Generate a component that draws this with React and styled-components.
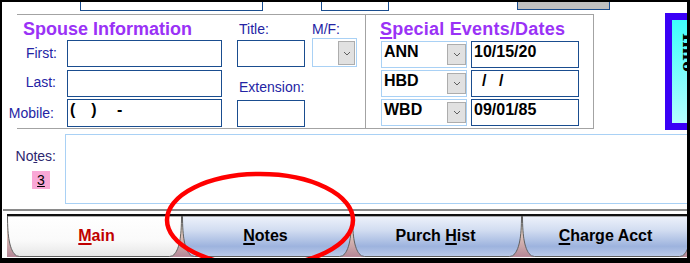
import React from "react";
import styled, { createGlobalStyle } from "styled-components";

const Global = createGlobalStyle`
  html, body { margin: 0; padding: 0; background: #fff; }
  * { box-sizing: border-box; }
`;

const Frame = styled.div`
  position: relative;
  width: 690px;
  height: 263px;
  border-style: solid;
  border-color: #000;
  border-width: 2px 3px 5px 2px;
  background: #fff;
  overflow: hidden;
  display: flex;
  flex-direction: column;
  font-family: "Liberation Sans", Arial, sans-serif;
`;

const TopStrip = styled.div`
  display: flex;
  align-items: flex-start;
  height: 11px;
  flex: none;
`;

const StubBox = styled.div`
  flex: none;
  width: ${(p) => p.$w}px;
  height: ${(p) => p.$h}px;
  margin-left: ${(p) => p.$ml}px;
  border: 1px solid #1a4d8f;
  border-top: none;
  background: ${(p) => p.$fill || "#fff"};
`;

const MiddleRow = styled.div`
  display: flex;
  align-items: flex-start;
  height: 117px;
  flex: none;
`;

const SpouseSection = styled.div`
  flex: none;
  margin-left: 15px;
  margin-top: 1px;
  width: 349px;
  height: 115px;
  border-top: 1px solid #a3a3a3;
  border-bottom: 1px solid #a3a3a3;
  border-right: 1px solid #a3a3a3;
  display: grid;
  grid-template-columns: 40px 10px 155px 15px 68px 7px 45px;
  grid-template-rows: 25px 30px 29px 28px;
`;

const SectionTitle = styled.div`
  grid-column: 1 / 7;
  grid-row: 1;
  align-self: start;
  justify-self: start;
  margin-top: 4px;
  margin-left: ${(p) => p.$ml || 0}px;
  font-size: 18px;
  line-height: 20px;
  font-weight: bold;
  color: #9a32f6;
  white-space: nowrap;
`;

const FieldLabel = styled.div`
  grid-column: ${(p) => p.$col};
  grid-row: ${(p) => p.$row};
  justify-self: ${(p) => (p.$end ? "end" : "start")};
  align-self: ${(p) => (p.$bottom ? "end" : "start")};
  margin-top: ${(p) => p.$mt || 0}px;
  margin-bottom: ${(p) => p.$mb || 0}px;
  margin-left: ${(p) => p.$ml || 0}px;
  margin-right: ${(p) => p.$mr || 0}px;
  font-size: 14px;
  line-height: 16px;
  color: #2424a4;
  white-space: nowrap;
`;

const TextBox = styled.div`
  grid-column: ${(p) => p.$col || "auto"};
  grid-row: ${(p) => p.$row || "auto"};
  align-self: start;
  flex: none;
  width: ${(p) => p.$w}px;
  height: ${(p) => p.$h}px;
  margin-top: ${(p) => p.$mt || 0}px;
  margin-left: ${(p) => p.$ml || 0}px;
  border: 1px solid #1a4d8f;
  background: #fff;
  padding: 1px 0 0 2px;
  font-size: 16px;
  line-height: 18px;
  font-weight: bold;
  color: #000;
  white-space: pre;
  overflow: hidden;
`;

const SelectBox = styled.div`
  grid-column: ${(p) => p.$col || "auto"};
  grid-row: ${(p) => p.$row || "auto"};
  align-self: start;
  flex: none;
  width: ${(p) => p.$w}px;
  height: ${(p) => p.$h}px;
  margin-top: ${(p) => p.$mt || 0}px;
  border: 1px solid #a9d1f5;
  background: #fff;
  display: flex;
  align-items: flex-start;
  padding: ${(p) => p.$pt}px ${(p) => p.$pr}px 0 2px;
`;

const SelectValue = styled.div`
  flex: 1;
  font-size: 16px;
  line-height: 18px;
  font-weight: bold;
  color: #000;
  margin-top: ${(p) => p.$mt || 0}px;
`;

const DropButton = styled.div`
  flex: none;
  width: ${(p) => p.$w}px;
  height: ${(p) => p.$h}px;
  background: #e1e1e1;
  border: 1px solid #adadad;
  display: flex;
  align-items: center;
  justify-content: center;
`;

const EventsSection = styled.div`
  flex: none;
  margin-top: 1px;
  width: 228px;
  height: 115px;
  border-top: 1px solid #a3a3a3;
  border-bottom: 1px solid #a3a3a3;
  border-right: 1px solid #a3a3a3;
  display: flex;
  flex-direction: column;
  padding-left: 14px;
`;

const EventsTitle = styled.div`
  margin-top: 4px;
  font-size: 18px;
  line-height: 20px;
  font-weight: bold;
  color: #9a32f6;
  white-space: nowrap;
  letter-spacing: 0.2px;
  u { text-decoration-thickness: 2px; text-underline-offset: 2px; }
`;

const EventRows = styled.div`
  display: flex;
  flex-direction: column;
  gap: 2px;
  margin-top: 2px;
  padding-left: 1px;
`;

const EventRow = styled.div`
  display: flex;
  align-items: flex-start;
`;

const PurpleBox = styled.div`
  flex: none;
  margin-left: 71px;
  width: 40px;
  height: 117px;
  border: 7px solid #3a00f6;
  background: linear-gradient(#3ffcfc, #b6fdfd);
  display: flex;
  justify-content: flex-start;
  padding-left: 7px;
  padding-top: 13px;
`;

const VerticalText = styled.div`
  writing-mode: vertical-rl;
  font-family: "Liberation Serif", serif;
  font-weight: bold;
  font-size: 22px;
  line-height: 22px;
  color: #000;
  white-space: nowrap;
`;

const NotesRow = styled.div`
  display: flex;
  flex: none;
  height: 70px;
  margin-top: 4px;
`;

const NotesLabelCol = styled.div`
  flex: none;
  width: 63px;
  display: flex;
  flex-direction: column;
  align-items: flex-end;
  padding-right: 9px;
`;

const NotesLabel = styled.div`
  margin-top: 14px;
  font-size: 14px;
  line-height: 16px;
  color: #2c2670;
`;

const CountBadge = styled.div`
  margin-top: 7px;
  margin-right: 6px;
  width: 18px;
  height: 18px;
  background: #f9a8d6;
  font-size: 14px;
  line-height: 18px;
  text-align: center;
  color: #000;
  text-decoration: underline;
`;

const NotesArea = styled.div`
  flex: none;
  width: 640px;
  height: 70px;
  border: 1px solid #a9d1f5;
  background: #fff;
`;

const Separator = styled.div`
  flex: none;
  height: 2px;
  margin-top: 5px;
  margin-left: 1px;
  background: #8a8a8a;
`;

const TabBar = styled.div`
  flex: none;
  display: flex;
  margin-top: 3px;
  margin-left: 5px;
  height: 43px;
  border-top: 2px solid #111;
  background: linear-gradient(#f3ecd0 0%, #dcc0b8 50%, #b48696 100%);
`;

const TabItem = styled.div`
  position: relative;
  flex: none;
  width: ${(p) => p.$w}px;
  height: 41px;
  display: flex;
  align-items: center;
  justify-content: center;
  padding-left: ${(p) => p.$pl || 0}px;
  padding-right: ${(p) => p.$pr || 0}px;
`;

const TabShape = styled.svg`
  position: absolute;
  left: 0;
  top: 0;
`;

const TabLabel = styled.span`
  position: relative;
  font-size: 16px;
  font-weight: bold;
  line-height: 18px;
  margin-top: -1px;
  color: ${(p) => (p.$active ? "#c00000" : "#000")};
  white-space: pre;
  u { text-decoration-thickness: 2px; text-underline-offset: 2px; }
`;

const Annotation = styled.svg`
  position: absolute;
  left: -2px;
  top: -2px;
  pointer-events: none;
`;

function Chevron() {
  return (
    <svg width="8" height="5" viewBox="0 0 8 5">
      <path d="M1 1 L4 4 L7 1" fill="none" stroke="#606060" strokeWidth="1" />
    </svg>
  );
}

function Select({ value, w, h, btnW, btnH, pt, pr, col, row, mt }) {
  return (
    <SelectBox $w={w} $h={h} $pt={pt} $pr={pr} $col={col} $row={row} $mt={mt}>
      <SelectValue $mt={1 - pt}>{value}</SelectValue>
      <DropButton $w={btnW} $h={btnH}>
        <Chevron />
      </DropButton>
    </SelectBox>
  );
}

function Tab({ w, active, pl, pr, id, children }) {
  const gid = `tabfill-${id}`;
  const W = w;
  const d = `M0.5 0 C0.5 22 3 32 7 37.5 Q9 40.5 12.5 40.5 L${W - 12.5} 40.5 Q${W - 9} 40.5 ${W - 7} 37.5 C${W - 3} 32 ${W - 0.5} 22 ${W - 0.5} 0 Z`;
  return (
    <TabItem $w={w} $pl={pl} $pr={pr}>
      <TabShape width={W} height={41} viewBox={`0 0 ${W} 41`}>
        <defs>
          <linearGradient id={gid} x1="0" y1="0" x2="0" y2="1">
            {active ? (
              <>
                <stop offset="0" stopColor="#ffffff" />
                <stop offset="0.6" stopColor="#fafafa" />
                <stop offset="1" stopColor="#e6e6e6" />
              </>
            ) : (
              <>
                <stop offset="0" stopColor="#eef2fb" />
                <stop offset="0.35" stopColor="#d2ddf1" />
                <stop offset="0.75" stopColor="#9db3de" />
                <stop offset="1" stopColor="#bccbea" />
              </>
            )}
          </linearGradient>
        </defs>
        <path d={d} fill={`url(#${gid})`} stroke="#5f5f5f" strokeWidth="1" />
      </TabShape>
      <TabLabel $active={active}>{children}</TabLabel>
    </TabItem>
  );
}

export default function App() {
  return (
    <>
      <Global />
      <Frame>
        <TopStrip>
          <StubBox $ml={78} $w={183} $h={9} />
          <StubBox $ml={58} $w={68} $h={9} />
          <StubBox $ml={128} $w={93} $h={8} $fill="#c0c0c0" />
        </TopStrip>

        <MiddleRow>
          <SpouseSection>
            <SectionTitle $ml={6}>Spouse Information</SectionTitle>
            <FieldLabel $col={5} $row={1} $bottom $mb={3} $ml={2}>Title:</FieldLabel>
            <FieldLabel $col={7} $row={1} $bottom $mb={3}>M/F:</FieldLabel>

            <FieldLabel $col={1} $row={2} $end $mt={5}>First:</FieldLabel>
            <TextBox $col={3} $row={2} $w={155} $h={27} />
            <TextBox $col={5} $row={2} $w={68} $h={27} />
            <Select col={7} row={2} mt={-2} value="" w={45} h={29} btnW={17} btnH={24} pt={2} pr={1} />

            <FieldLabel $col={1} $row={3} $end $mt={4} $mr={1}>Last:</FieldLabel>
            <TextBox $col={3} $row={3} $w={155} $h={27} />
            <FieldLabel $col={5} $row={3} $bottom $mb={4} $ml={2}>Extension:</FieldLabel>

            <FieldLabel $col={1} $row={4} $end $mt={6} $mr={3}>Mobile:</FieldLabel>
            <TextBox $col={3} $row={4} $w={155} $h={28}>{"(\u2002\u2002)\u2002\u2002 -"}</TextBox>
            <TextBox $col={5} $row={4} $w={68} $h={27} $mt={1} />
          </SpouseSection>

          <EventsSection>
            <EventsTitle>
              <u>S</u>pecial Events/Dates
            </EventsTitle>
            <EventRows>
              <EventRow>
                <Select value="ANN" w={86} h={27} btnW={19} btnH={21} pt={2} pr={0} />
                <TextBox $w={108} $h={27} $ml={4}>10/15/20</TextBox>
              </EventRow>
              <EventRow>
                <Select value="HBD" w={86} h={27} btnW={19} btnH={21} pt={2} pr={0} />
                <TextBox $w={108} $h={27} $ml={4}>{"\u2002/\u2002 /"}</TextBox>
              </EventRow>
              <EventRow>
                <Select value="WBD" w={86} h={27} btnW={19} btnH={21} pt={2} pr={0} />
                <TextBox $w={108} $h={27} $ml={4}>09/01/85</TextBox>
              </EventRow>
            </EventRows>
          </EventsSection>

          <PurpleBox>
            <VerticalText>Info</VerticalText>
          </PurpleBox>
        </MiddleRow>

        <NotesRow>
          <NotesLabelCol>
            <NotesLabel>
              No<u>t</u>es:
            </NotesLabel>
            <CountBadge>3</CountBadge>
          </NotesLabelCol>
          <NotesArea />
        </NotesRow>

        <Separator />

        <TabBar>
          <Tab id="main" w={175} active pl={4}>
            <u>M</u>ain
          </Tab>
          <Tab id="notes" w={170} pr={3}>
            <u>N</u>otes
          </Tab>
          <Tab id="purch" w={170} pr={3}>
            {"Purch "}
            <u>H</u>ist
          </Tab>
          <Tab id="charge" w={170} pr={3}>
            <u>C</u>harge Acct
          </Tab>
        </TabBar>

        <Annotation width="690" height="263" viewBox="0 0 690 263">
          <ellipse cx="260" cy="220" rx="93" ry="46" fill="none" stroke="#ff0000" strokeWidth="4.5" />
        </Annotation>
      </Frame>
    </>
  );
}
